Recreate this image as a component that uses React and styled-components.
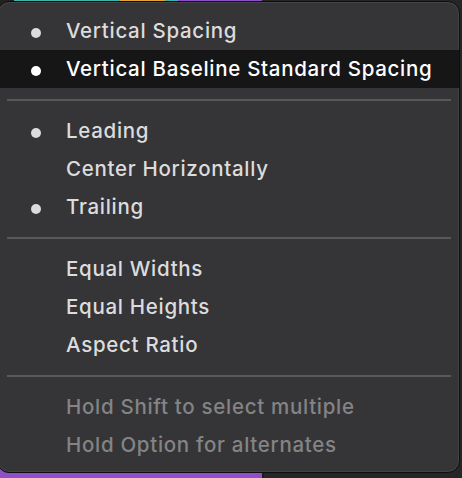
import React from 'react';
import styled, { createGlobalStyle } from 'styled-components';

const GlobalStyle = createGlobalStyle`
  html, body {
    margin: 0;
    padding: 0;
    background: #262628;
  }
  body {
    font-family: Inter, "Noto Sans", sans-serif;
    -webkit-font-smoothing: antialiased;
  }
`;

const Stage = styled.div`
  position: relative;
  width: 462px;
  height: 478px;
  overflow: hidden;
  background:
    linear-gradient(to right, #222 0 14px, #3db3ab 14px 120px, #e3a23a 120px 165px, #3db3ab 165px 178px, #8e4fc8 178px 262px, #262628 262px) top / 100% 4px no-repeat,
    linear-gradient(to right, #8e4fc8 0 262px, #1c1c1e 262px 264px, #262628 264px) bottom / 100% 10px no-repeat,
    #262628;
`;

const Menu = styled.div`
  position: absolute;
  top: 1px;
  left: -3px;
  right: 2px;
  bottom: 5px;
  box-sizing: border-box;
  padding: 10px 0 9px;
  background: #353537;
  border: 1px solid #0e0e0f;
  border-radius: 12px;
  box-shadow: inset 0 0 0 1px rgba(255, 255, 255, 0.08);
  display: flex;
  flex-direction: column;
`;

const Row = styled.div`
  display: flex;
  align-items: center;
  box-sizing: border-box;
  height: 38px;
  flex-shrink: 0;
  padding: 0 0 2px 33px;
  background: ${p => (p.$active ? '#161617' : 'transparent')};
  color: ${p => (p.$disabled ? '#848486' : p.$active ? '#ffffff' : '#dcdcdd')};
  font-size: 20.5px;
  font-weight: 500;
  letter-spacing: 0.7px;
  white-space: nowrap;
`;

const Check = styled.span`
  width: 35px;
  flex-shrink: 0;
  display: flex;
  align-items: center;

  &::before {
    content: '';
    display: ${p => (p.$on ? 'block' : 'none')};
    width: 10px;
    height: 10px;
    border-radius: 50%;
    margin-top: 6px;
    background: ${p => (p.$bright ? '#ffffff' : '#dcdcdd')};
  }
`;

const Separator = styled.div`
  height: 24px;
  flex-shrink: 0;
  display: flex;
  align-items: center;
  padding: 0 8px 0 9px;

  &::after {
    content: '';
    flex: 1;
    height: 2px;
    background: #58585a;
  }
`;

const groups = [
  [
    { label: 'Vertical Spacing', on: true },
    { label: 'Vertical Baseline Standard Spacing', on: true, active: true },
  ],
  [
    { label: 'Leading', on: true },
    { label: 'Center Horizontally' },
    { label: 'Trailing', on: true },
  ],
  [
    { label: 'Equal Widths' },
    { label: 'Equal Heights' },
    { label: 'Aspect Ratio' },
  ],
  [
    { label: 'Hold Shift to select multiple', disabled: true },
    { label: 'Hold Option for alternates', disabled: true },
  ],
];

const App = () => {
  return (
    <Stage>
      <GlobalStyle />
      <Menu>
        {groups.map((items, g) => (
          <React.Fragment key={g}>
            {g > 0 && <Separator />}
            {items.map(item => (
              <Row key={item.label} $active={item.active} $disabled={item.disabled}>
                <Check $on={item.on} $bright={item.active} />
                {item.label}
              </Row>
            ))}
          </React.Fragment>
        ))}
      </Menu>
    </Stage>
  );
};

export default App;
